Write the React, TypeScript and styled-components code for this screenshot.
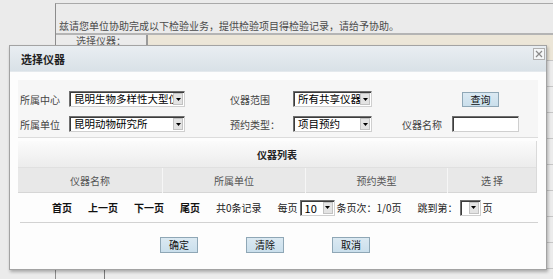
import styled, { createGlobalStyle } from 'styled-components'

const GlobalStyle = createGlobalStyle`
  html, body {
    margin: 0;
    padding: 0;
    background: #ebebeb;
    font-family: "Noto Sans CJK SC", "Liberation Sans", sans-serif;
  }
`

const Screen = styled.div`
  position: relative;
  width: 553px;
  height: 279px;
  overflow: hidden;
  background: #ebebeb;
`

// 背景页面（弹窗下面的表单）
const Page = styled.div`
  padding: 3px 0 0 55px;
`

const Form = styled.div`
  border-top: 1px solid #a9a9a9;
  border-left: 1px solid #8c8c8c;
`

const Blank = styled.div`
  height: 15px;
`

const Notice = styled.div`
  height: 14px;
  line-height: 14px;
  padding-left: 3px;
  font-size: 10px;
  color: #4a4a4a;
  border-bottom: 2px solid #b4b4b4;
  white-space: nowrap;
`

const FormRow = styled.div<{ $split: number }>`
  display: grid;
  grid-template-columns: ${(p) => p.$split}px 1fr;
  height: 25px;
  border-bottom: 1px solid #c6c6c6;
`

const FormLabel = styled.div<{ $thick?: boolean }>`
  font-size: 10px;
  color: #555;
  text-align: center;
  padding-top: 1px;
  line-height: 9px;
  border-right: ${(p) => (p.$thick ? '2px solid #9a9a9a' : '1px solid #7a7a7a')};
`

const FormCell = styled.div<{ $beige?: boolean }>`
  background: ${(p) => (p.$beige ? '#ece6d8' : '#ececec')};
`

// 弹窗
const Dialog = styled.div`
  position: absolute;
  left: 9px;
  top: 45px;
  width: 538px;
  height: 225px;
  box-sizing: border-box;
  border: 1px solid #a3a3a3;
  background: #fdfdfd;
  box-shadow: 1px 2px 3px rgba(0, 0, 0, 0.28);
  display: flex;
  flex-direction: column;
`

const TitleBar = styled.div`
  position: relative;
  height: 26px;
  flex: none;
  background: linear-gradient(#e9eef2, #d9e1e7);
  border-bottom: 1px solid #e4e9ed;
  box-sizing: border-box;
  padding-left: 11px;
  line-height: 26px;
  font-size: 11px;
  font-weight: bold;
  color: #1e1e1e;
`

const CloseBtn = styled.div`
  position: absolute;
  right: 1px;
  top: 2px;
  width: 12px;
  height: 12px;
  box-sizing: border-box;
  border: 1px solid #b0b0b0;
  background: #f4f6f7;
  display: flex;
  align-items: center;
  justify-content: center;
`

const Filter = styled.div`
  margin: 8px 8px 0 8px;
  height: 58px;
  box-sizing: border-box;
  padding: 11px 0 0 2px;
  background: #f6f6f6;
  border-bottom: 1px solid #dcdcdc;
  display: grid;
  grid-template-columns: 49px 116px 45px 63px 79px 30px 50px 67px;
  grid-template-rows: 16px 16px;
  row-gap: 9px;
  align-items: center;
`

const Label = styled.div<{ $col: number }>`
  grid-column: ${(p) => p.$col};
  font-size: 10px;
  color: #444;
  white-space: nowrap;
`

const SelectBox = styled.div<{ $w: number; $col?: number }>`
  grid-column: ${(p) => p.$col ?? 'auto'};
  width: ${(p) => p.$w}px;
  height: 16px;
  box-sizing: border-box;
  display: flex;
  background: #fff;
  border: 1px solid #6f6f6f;
  border-right-color: #cfcfcf;
  border-bottom-color: #cfcfcf;
  box-shadow: inset 1px 1px 0 #3c3c3c;
`

const SelectText = styled.div<{ $size?: number }>`
  flex: 1;
  min-width: 0;
  overflow: hidden;
  white-space: nowrap;
  padding-left: 4px;
  font-size: ${(p) => p.$size ?? 10.5}px;
  line-height: 14px;
  color: #000;
`

const Arrow = styled.div`
  width: 10px;
  margin: 1px 1px 1px 0;
  background: #e3e3e3;
  border: 1px solid #c2c2c2;
  box-sizing: border-box;
  display: flex;
  align-items: center;
  justify-content: center;
`

const TextInput = styled.div`
  grid-column: 8;
  height: 16px;
  box-sizing: border-box;
  background: #fff;
  border: 1px solid #6f6f6f;
  border-right-color: #cfcfcf;
  border-bottom-color: #cfcfcf;
  box-shadow: inset 1px 1px 0 #3c3c3c;
`

const Btn = styled.div<{ $col?: number }>`
  grid-column: ${(p) => p.$col ?? 'auto'};
  justify-self: start;
  margin-left: ${(p) => (p.$col ? 10 : 0)}px;
  width: 37px;
  height: 15px;
  box-sizing: border-box;
  background: linear-gradient(#dbe9f2, #cadfec);
  border: 1px solid #8fa7b6;
  font-size: 10px;
  line-height: 13px;
  text-align: center;
  color: #111;
`

const Table = styled.div`
  margin: 3px 9px 0 8px;
  border-right: 1px solid #dadada;
`

const TableHead = styled.div`
  height: 27px;
  line-height: 27px;
  text-align: center;
  font-size: 10px;
  font-weight: bold;
  color: #222;
  background: linear-gradient(#fbfbfb, #ececec);
  border-bottom: 1px solid #e0e0e0;
  box-sizing: border-box;
`

const ColHead = styled.div`
  display: grid;
  grid-template-columns: 144px 143px 142px 1fr;
  height: 25px;
  background: #e8e8e8;
  border-bottom: 1px solid #d6d6d6;
  box-sizing: border-box;
`

const Col = styled.div`
  font-size: 10px;
  color: #555;
  text-align: center;
  line-height: 25px;
  & + & {
    border-left: 1px solid #f6f6f6;
  }
`

const Pager = styled.div`
  height: 29px;
  padding-left: 42px;
  display: flex;
  align-items: center;
  gap: 16px;
  font-size: 10px;
  color: #222;
  white-space: nowrap;
`

const PageLink = styled.span`
  font-weight: bold;
  color: #111;
`

const Group = styled.span`
  display: flex;
  align-items: center;
  gap: 2px;
`

const Divider = styled.div`
  height: 1px;
  margin: 0 8px 0 10px;
  background: #d2d2d2;
`

const Actions = styled.div`
  display: flex;
  gap: 48px;
  padding: 14px 0 0 150px;
  & > div {
    width: 38px;
    height: 16px;
    line-height: 14px;
  }
`

const Tri = () => (
  <svg width="5" height="3" viewBox="0 0 5 3">
    <path d="M0 0H5L2.5 3Z" fill="#000" />
  </svg>
)

const FakeSelect = ({ w, text, col, size }: { w: number; text: string; col?: number; size?: number }) => (
  <SelectBox $w={w} $col={col}>
    <SelectText $size={size}>{text}</SelectText>
    <Arrow>
      <Tri />
    </Arrow>
  </SelectBox>
)

export default function App() {
  const lowerRows = [0, 1, 2, 3, 4, 5, 6, 7, 8, 9]
  return (
    <Screen>
      <GlobalStyle />
      <Page>
        <Form>
          <Blank />
          <Notice>兹请您单位协助完成以下检验业务，提供检验项目得检验记录，请给予协助。</Notice>
          <FormRow $split={92}>
            <FormLabel $thick>选择仪器：</FormLabel>
            <FormCell $beige />
          </FormRow>
          {lowerRows.map((i) => (
            <FormRow key={i} $split={49}>
              <FormLabel />
              <FormCell />
            </FormRow>
          ))}
        </Form>
      </Page>

      <Dialog>
        <TitleBar>
          选择仪器
          <CloseBtn>
            <svg width="8" height="8" viewBox="0 0 8 8">
              <path d="M1 1L7 7M7 1L1 7" stroke="#8a8a8a" strokeWidth="1.2" />
            </svg>
          </CloseBtn>
        </TitleBar>

        <Filter>
          <Label $col={1}>所属中心</Label>
          <FakeSelect col={2} w={116} text="昆明生物多样性大型仪器区域中心" />
          <Label $col={4}>仪器范围</Label>
          <FakeSelect col={5} w={79} text="所有共享仪器" />
          <Btn $col={8}>查询</Btn>

          <Label $col={1}>所属单位</Label>
          <FakeSelect col={2} w={116} text="昆明动物研究所" />
          <Label $col={4}>预约类型：</Label>
          <FakeSelect col={5} w={79} text="项目预约" />
          <Label $col={7}>仪器名称</Label>
          <TextInput />
        </Filter>

        <Table>
          <TableHead>仪器列表</TableHead>
          <ColHead>
            <Col>仪器名称</Col>
            <Col>所属单位</Col>
            <Col>预约类型</Col>
            <Col>选 择</Col>
          </ColHead>
        </Table>

        <Pager>
          <PageLink>首页</PageLink>
          <PageLink>上一页</PageLink>
          <PageLink>下一页</PageLink>
          <PageLink>尾页</PageLink>
          <span>共0条记录</span>
          <Group>
            每页
            <FakeSelect w={35} text="10" size={11} />
            条页次：1/0页
          </Group>
          <Group>
            跳到第：
            <FakeSelect w={21} text="" />
            页
          </Group>
        </Pager>
        <Divider />

        <Actions>
          <Btn>确定</Btn>
          <Btn>清除</Btn>
          <Btn>取消</Btn>
        </Actions>
      </Dialog>
    </Screen>
  )
}
